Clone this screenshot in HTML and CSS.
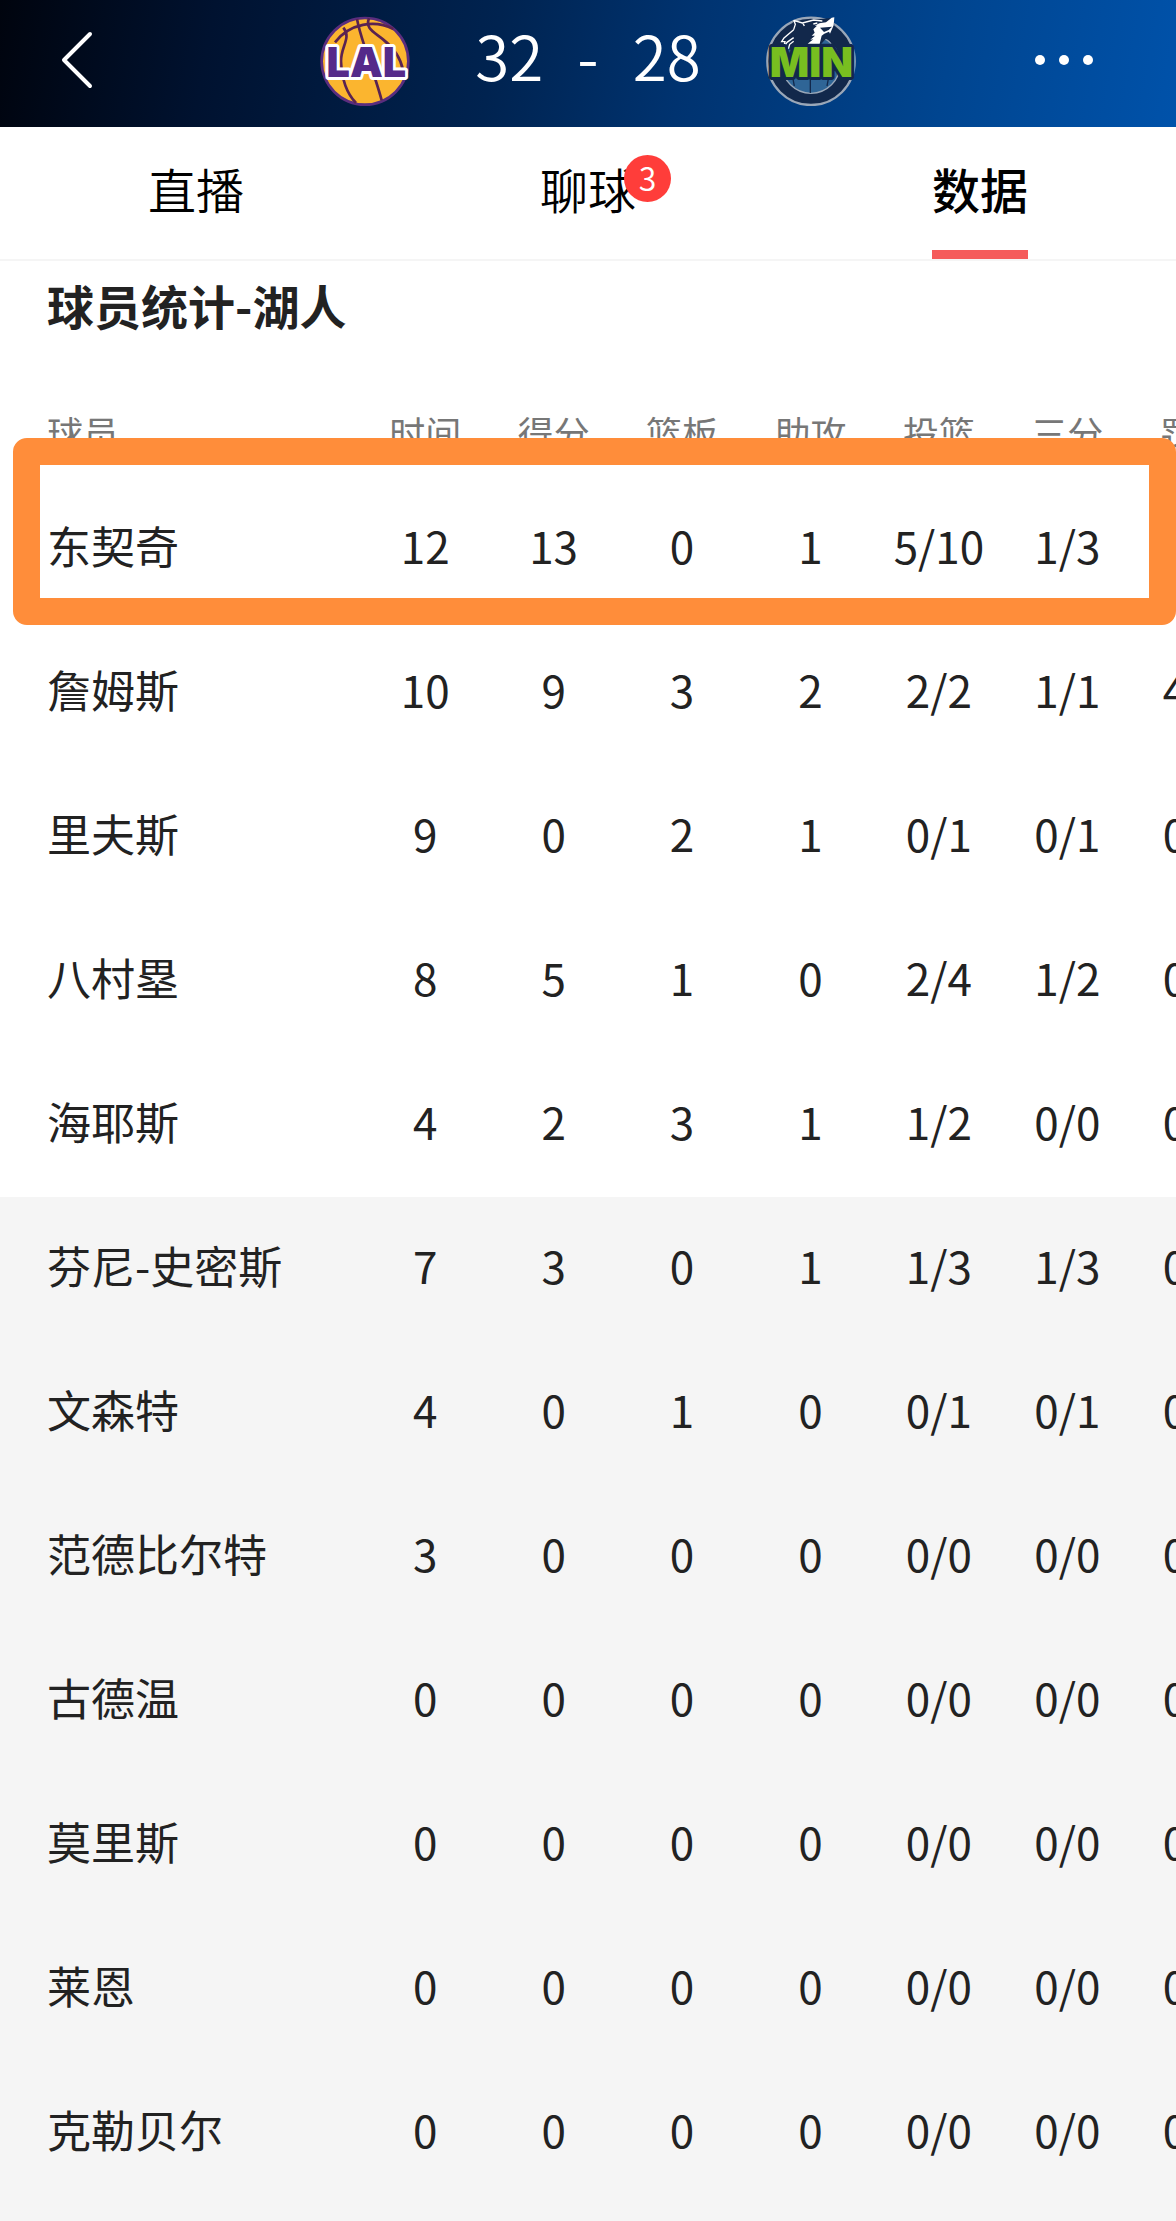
FILE: index.html
```html
<!DOCTYPE html>
<html lang="zh-CN">
<head>
<meta charset="utf-8">
<meta name="viewport" content="width=device-width, initial-scale=1">
<title>球员统计-湖人</title>
<link rel="stylesheet" href="styles.css">
</head>
<body>
<header class="topbar">
  <button class="icon-button back" type="button" aria-label="返回">
    <svg width="34" height="58" viewBox="0 0 34 58" fill="none" stroke="#fff" stroke-width="4" stroke-linecap="round" stroke-linejoin="round"><path d="M30 3 4 29 30 55"/></svg>
  </button>
  <div class="matchup">
    <svg class="logo" viewBox="55 45 270 270" role="img" aria-label="LAL">
      <circle cx="190" cy="181" r="130" fill="#fbb52f" stroke="#5a2d7e" stroke-width="8"/>
      <g fill="none" stroke="#5a2351" stroke-width="8">
        <path d="M100 124C145 66 220 56 275 84"/>
        <path d="M125 80C150 110 118 135 118 180 120 235 138 280 163 306"/>
        <path d="M166 54C174 96 186 126 198 165 214 214 230 260 240 298"/>
        <path d="M202 52C190 82 215 92 244 115 282 145 298 175 304 208"/>
      </g>
      <text class="logo-text lal" x="194" y="227" text-anchor="middle">LAL</text>
    </svg>
    <div class="score"><span>32</span><span>-</span><span>28</span></div>
    <svg class="logo" viewBox="65 45 270 270" role="img" aria-label="MIN">
      <circle cx="200" cy="181" r="131" fill="#12284b" stroke="#9aa7b8" stroke-width="7"/>
      <circle cx="200" cy="190" r="87" fill="#2f6596" stroke="#9aa7b8" stroke-width="4"/>
      <path d="M198 190V276M155 190Q140 215 150 255M242 190Q258 215 248 255M245 105Q275 130 280 180M225 130H270" fill="none" stroke="#12284b" stroke-width="4"/>
      <path d="M112 142 119 112 148 82 145 62 172 63 205 56 268 50 270 75 257 100 225 135 160 150Z" fill="#12284b"/>
      <path d="M270 49 268 73 257 98 254 92 240 98 232 104 226 128 190 128 207 115 198 116 212 104 202 104 211 95 207 85 218 74 211 74 225 67 245 64 262 50Z" fill="#fff"/>
      <path d="M227 80 263 77 253 87 239 93Z" fill="#12284b"/>
      <path d="M148 58 153 70 148 86M148 58 174 66 208 57 234 60M176 67 180 75M148 86 119 111 112 122 122 122 118 139 128 124 148 110M132 144 136 130 148 121M207 69 219 66" fill="none" stroke="#fff" stroke-width="4"/>
      <text class="logo-text min" x="201" y="229" text-anchor="middle">MIN</text>
    </svg>
  </div>
  <button class="icon-button more" type="button" aria-label="更多">
    <svg width="60" height="12" viewBox="0 0 60 12" fill="#fff"><circle cx="6" cy="6" r="5"/><circle cx="30" cy="6" r="5"/><circle cx="54" cy="6" r="5"/></svg>
  </button>
</header>

<nav class="tabs">
  <a class="tab" href="#live"><span class="tab-label">直播</span></a>
  <a class="tab" href="#chat"><span class="tab-label">聊球<span class="badge">3</span></span></a>
  <a class="tab active" href="#data" aria-current="page"><span class="tab-label">数据</span></a>
</nav>

<main id="data">
  <h1 class="title">球员统计-湖人</h1>
  <div class="stats">
    <div class="stats-scroll">
      <table class="stats-table">
        <thead>
          <tr><th class="player" scope="col">球员</th><th scope="col">时间</th><th scope="col">得分</th><th scope="col">篮板</th><th scope="col">助攻</th><th scope="col">投篮</th><th scope="col">三分</th><th scope="col">罚球</th></tr>
        </thead>
        <tbody class="starters">
          <tr><th class="player" scope="row">东契奇</th><td>12</td><td>13</td><td>0</td><td>1</td><td>5/10</td><td>1/3</td><td></td></tr>
          <tr><th class="player" scope="row">詹姆斯</th><td>10</td><td>9</td><td>3</td><td>2</td><td>2/2</td><td>1/1</td><td>4/4</td></tr>
          <tr><th class="player" scope="row">里夫斯</th><td>9</td><td>0</td><td>2</td><td>1</td><td>0/1</td><td>0/1</td><td>0/0</td></tr>
          <tr><th class="player" scope="row">八村塁</th><td>8</td><td>5</td><td>1</td><td>0</td><td>2/4</td><td>1/2</td><td>0/0</td></tr>
          <tr><th class="player" scope="row">海耶斯</th><td>4</td><td>2</td><td>3</td><td>1</td><td>1/2</td><td>0/0</td><td>0/0</td></tr>
        </tbody>
        <tbody class="bench">
          <tr><th class="player" scope="row">芬尼-史密斯</th><td>7</td><td>3</td><td>0</td><td>1</td><td>1/3</td><td>1/3</td><td>0/0</td></tr>
          <tr><th class="player" scope="row">文森特</th><td>4</td><td>0</td><td>1</td><td>0</td><td>0/1</td><td>0/1</td><td>0/0</td></tr>
          <tr><th class="player" scope="row">范德比尔特</th><td>3</td><td>0</td><td>0</td><td>0</td><td>0/0</td><td>0/0</td><td>0/0</td></tr>
          <tr><th class="player" scope="row">古德温</th><td>0</td><td>0</td><td>0</td><td>0</td><td>0/0</td><td>0/0</td><td>0/0</td></tr>
          <tr><th class="player" scope="row">莫里斯</th><td>0</td><td>0</td><td>0</td><td>0</td><td>0/0</td><td>0/0</td><td>0/0</td></tr>
          <tr><th class="player" scope="row">莱恩</th><td>0</td><td>0</td><td>0</td><td>0</td><td>0/0</td><td>0/0</td><td>0/0</td></tr>
          <tr><th class="player" scope="row">克勒贝尔</th><td>0</td><td>0</td><td>0</td><td>0</td><td>0/0</td><td>0/0</td><td>0/0</td></tr>
        </tbody>
      </table>
    </div>
    <div class="highlight" aria-hidden="true"></div>
  </div>
</main>
</body>
</html>
```
FILE: styles.css
```css
* {
  box-sizing: border-box;
}

body {
  margin: 0;
  background: #f5f5f5;
  color: #222;
  font-family: "Noto Sans CJK SC", "Noto Sans", sans-serif;
}

/* Score bar */
.topbar {
  display: grid;
  grid-template-columns: 1fr auto 1fr;
  align-items: center;
  height: 127px;
  padding: 0 60px 8px;
  background: linear-gradient(100deg, #00040e 0%, #001230 18%, #002350 42%, #003370 58%, #004590 80%, #0052aa 100%);
}

.icon-button {
  display: flex;
  align-items: center;
  height: 66px;
  padding: 0;
  border: 0;
  background: none;
  cursor: pointer;
}

.back {
  justify-self: start;
}

.more {
  justify-self: end;
  margin-right: 22px;
}

.matchup {
  display: flex;
  align-items: center;
  gap: 65px;
}

.logo {
  width: 90px;
  height: 90px;
  margin-top: 2px;
}

.logo-text {
  font-family: Inter, sans-serif;
  font-size: 124px;
  font-weight: 900;
  paint-order: stroke;
  stroke-linejoin: round;
  stroke-width: 18px;
}

.lal {
  fill: #552a8a;
  stroke: #fff;
}

.min {
  fill: #78be20;
  stroke: #12284b;
}

.score {
  display: flex;
  gap: 34px;
  padding-bottom: 12px;
  color: #fff;
  font-size: 62px;
  font-weight: 350;
  line-height: 90px;
}

/* Tabs */
.tabs {
  display: grid;
  grid-template-columns: repeat(3, 1fr);
  height: 134px;
  border-bottom: 2px solid #f5f5f5;
  background: #fff;
}

.tab {
  display: flex;
  justify-content: center;
  color: #000;
  font-size: 48px;
  font-weight: 350;
  line-height: 123px;
  text-decoration: none;
}

.tab-label {
  position: relative;
}

.active {
  font-weight: 500;
}

.active .tab-label {
  border-bottom: 9px solid #f55b5b;
}

.badge {
  position: absolute;
  top: 28px;
  left: 84px;
  width: 47px;
  height: 47px;
  border-radius: 50%;
  background: #ff3d3a;
  color: #fff;
  font-size: 32px;
  line-height: 45px;
  text-align: center;
}

/* Player statistics */
.title {
  margin: 0;
  padding: 0 47px 38px;
  background: #fff;
  font-size: 47px;
  font-weight: 700;
  line-height: 88px;
}

.stats {
  position: relative;
}

.stats-scroll {
  overflow-x: auto;
  scrollbar-width: none;
}

.stats-table {
  width: calc(100% + 84px);
  border-collapse: collapse;
  table-layout: fixed;
  font-size: 44px;
}

.stats-table thead {
  height: 90px;
  background: #fff;
  color: #777;
  font-size: 36px;
}

.stats-table th,
.stats-table td {
  padding: 0;
  font-weight: 400;
  text-align: center;
  white-space: nowrap;
}

.stats-table .player {
  width: 361px;
  padding-left: 47px;
  text-align: left;
}

.stats-table tbody tr {
  height: 144px;
}

.stats-table tbody th,
.stats-table tbody td {
  padding-bottom: 9px;
}

.starters {
  background: #fff;
}

.bench {
  background: #f5f5f5;
}

/* Marker frame round the top scorer's row */
.highlight {
  position: absolute;
  top: 51px;
  left: 13px;
  right: 0;
  height: 187px;
  border: 27px solid #ff8d3a;
  border-radius: 14px;
  pointer-events: none;
}
```
